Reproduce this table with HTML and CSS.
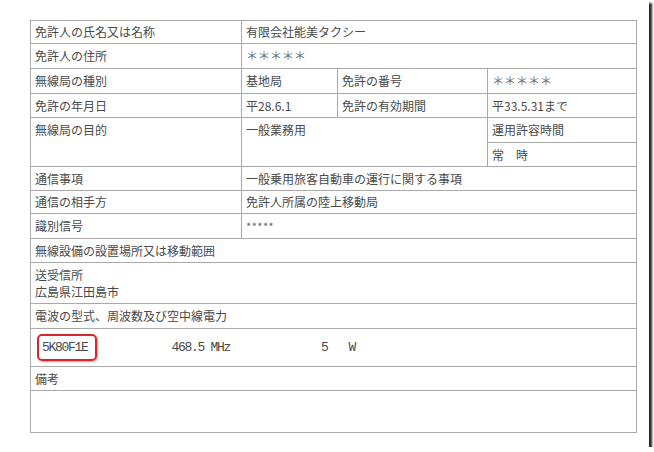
FILE: index.html
```html
<!DOCTYPE html>
<html lang="ja">
<head>
<meta charset="utf-8">
<link rel="stylesheet" href="styles.css">
</head>
<body>
<div class="photo">
  <table class="license">
    <colgroup>
      <col class="c1"><col class="c2"><col class="c3"><col class="c4">
    </colgroup>
    <tr class="h23"><td>免許人の氏名又は名称</td><td colspan="3">有限会社能美タクシー</td></tr>
    <tr class="h25"><td>免許人の住所</td><td colspan="3" class="stars">＊＊＊＊＊</td></tr>
    <tr class="h25"><td>無線局の種別</td><td>基地局</td><td>免許の番号</td><td class="stars">＊＊＊＊＊</td></tr>
    <tr class="h24"><td>免許の年月日</td><td>平28.6.1</td><td>免許の有効期間</td><td>平33.5.31まで</td></tr>
    <tr class="h25"><td rowspan="2" class="top">無線局の目的</td><td rowspan="2" colspan="2" class="top">一般業務用</td><td>運用許容時間</td></tr>
    <tr class="h24"><td>常　時</td></tr>
    <tr class="h24"><td>通信事項</td><td colspan="3">一般乗用旅客自動車の運行に関する事項</td></tr>
    <tr class="h23"><td>通信の相手方</td><td colspan="3">免許人所属の陸上移動局</td></tr>
    <tr class="h25"><td>識別信号</td><td colspan="3" class="small-stars">*****</td></tr>
    <tr class="h24"><td colspan="4">無線設備の設置場所又は移動範囲</td></tr>
    <tr class="h41"><td colspan="4" class="two">送受信所<br>広島県江田島市</td></tr>
    <tr class="h25"><td colspan="4">電波の型式、周波数及び空中線電力</td></tr>
    <tr class="h38">
      <td colspan="4" class="emission">
        <div class="emission-row">
          <span class="mark">5K80F1E</span>
          <span class="freq">468.5 MHz</span>
          <span class="power">5</span>
          <span class="unit">W</span>
        </div>
      </td>
    </tr>
    <tr class="h24"><td colspan="4">備考</td></tr>
    <tr class="h42"><td colspan="4"></td></tr>
  </table>
</div>
</body>
</html>
```
FILE: styles.css
```css
html, body {
  margin: 0;
  padding: 0;
  background: #ffffff;
}

.photo {
  width: 649px;
  height: 447px;
  box-sizing: border-box;
  padding: 20px 0 0 30px;
  background: #ffffff;
  box-shadow: 3px 3px 2px rgba(0, 0, 0, 0.85);
}

.license {
  border-collapse: collapse;
  table-layout: fixed;
  width: 606px;
  font-family: "Noto Sans CJK JP", "Noto Sans", sans-serif;
  font-size: 12px;
  color: #4a4a4a;
}

.c1 { width: 211px; }
.c2 { width: 96px; }
.c3 { width: 150px; }
.c4 { width: 149px; }

.license td {
  border: 1px solid #a9a9a9;
  padding: 0 4px;
  vertical-align: middle;
  line-height: 16px;
  white-space: nowrap;
}

.license td.top {
  vertical-align: top;
  padding-top: 4px;
}

.license td.two {
  line-height: 17px;
}

.h23 { height: 23px; }
.h24 { height: 24px; }
.h25 { height: 25px; }
.h38 { height: 38px; }
.h41 { height: 41px; }
.h42 { height: 42px; }

.stars {
  color: #6a6a6a;
  font-size: 12px;
}

.small-stars {
  color: #666;
  font-size: 11px;
  letter-spacing: 0.5px;
}

.license td.emission {
  padding: 0 6px;
}

.emission-row {
  display: flex;
  align-items: center;
  font-family: "Liberation Mono", "DejaVu Sans Mono", monospace;
  font-size: 13px;
  letter-spacing: -1.3px;
  color: #4a4a4a;
}

.mark {
  display: inline-block;
  border: 2px solid #d8262f;
  border-radius: 5px;
  padding: 4px 7px 4px 3px;
  box-shadow: 1px 1px 2px rgba(0, 0, 0, 0.35);
  line-height: 15px;
}

.freq { margin-left: 75px; }
.power { margin-left: 91px; }
.unit { margin-left: 21px; }
```
